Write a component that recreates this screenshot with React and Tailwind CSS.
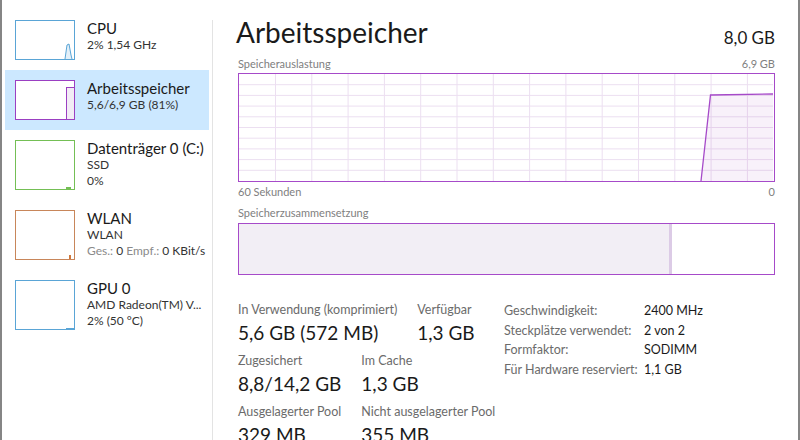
import React from "react";

const font = "font-['Segoe_UI','Lato',sans-serif]";

function Thumb({ color, h, children }) {
  return (
    <div
      className={`relative w-[60px] shrink-0 border bg-white ${h}`}
      style={{ borderColor: color }}
    >
      {children}
    </div>
  );
}

function SideItem({ thumb, title, lines, active }) {
  return (
    <div className={`flex gap-3 py-[10px] pl-[10px] ${active ? "bg-[#cce8ff]" : ""}`}>
      {thumb}
      <div className="-mt-[1px] min-w-0">
        <div className="text-[15px] leading-[18px] text-[#1a1a1a]">{title}</div>
        {lines.map((l, i) => (
          <div key={i} className="text-[12px] leading-[16px] text-[#333] whitespace-nowrap">
            {l}
          </div>
        ))}
      </div>
    </div>
  );
}

function Sidebar() {
  return (
    <div className="w-[210px] shrink-0 px-[3px] pt-[10px]">
      <SideItem
        title="CPU"
        lines={["2%  1,54 GHz"]}
        thumb={
          <Thumb color="#5aa5d6" h="h-[40px]">
            <svg className="absolute inset-0" width="58" height="38" viewBox="0 0 58 38">
              <path d="M49 38 L51 24 L53 23 L55 34 L56 38" fill="#e3f0f9" stroke="#5aa5d6" strokeWidth="1" />
            </svg>
          </Thumb>
        }
      />
      <SideItem
        active
        title="Arbeitsspeicher"
        lines={["5,6/6,9 GB (81%)"]}
        thumb={
          <Thumb color="#9b3fc2" h="h-[40px]">
            <div className="absolute bottom-0 right-0 h-[32px] w-[8px] border-l border-t border-[#9b3fc2] bg-[#f2ecf5]" />
          </Thumb>
        }
      />
      <SideItem
        title="Datenträger 0 (C:)"
        lines={["SSD", "0%"]}
        thumb={
          <Thumb color="#74bf55" h="h-[50px]">
            <div className="absolute bottom-0 right-[3px] h-[2px] w-[5px] bg-[#74bf55]" />
          </Thumb>
        }
      />
      <SideItem
        title="WLAN"
        lines={[
          "WLAN",
          <span key="g">
            <span className="text-[#8a8a8a]">Ges.: </span>0 <span className="text-[#8a8a8a]">Empf.: </span>0 KBit/s
          </span>,
        ]}
        thumb={
          <Thumb color="#c8865a" h="h-[50px]">
            <div className="absolute bottom-0 right-[3px] h-[4px] w-[2px] bg-[#d0783c]" />
          </Thumb>
        }
      />
      <SideItem
        title="GPU 0"
        lines={["AMD Radeon(TM) V...", "2%  (50 °C)"]}
        thumb={
          <Thumb color="#5aa5d6" h="h-[50px]">
            <div className="absolute bottom-0 right-0 h-[1px] w-[8px] bg-[#5aa5d6]" />
          </Thumb>
        }
      />
    </div>
  );
}

function UsageChart() {
  const W = 534;
  const H = 107;
  const vx = Array.from({ length: 14 }, (_, i) => 36.5 + 36.3 * i);
  const hy = Array.from({ length: 9 }, (_, j) => (H / 10) * (j + 1));
  return (
    <div className="h-[109px] w-full border border-[#a64ac9]">
      <svg width={W} height={H} viewBox={`0 0 ${W} ${H}`} className="block">
        {vx.map((x) => (
          <line key={x} x1={x} y1="0" x2={x} y2={H} stroke="#ecdff1" strokeWidth="1" />
        ))}
        {hy.map((y) => (
          <line key={y} x1="0" y1={y} x2={W} y2={y} stroke="#ecdff1" strokeWidth="1" />
        ))}
        <polygon points={`462,${H} 471.5,21 ${W},20 ${W},${H}`} fill="rgba(139,18,174,0.06)" />
        <polyline points={`462,${H} 471.5,21 ${W},20`} fill="none" stroke="#a64ac9" strokeWidth="1.3" />
      </svg>
    </div>
  );
}

function Stat({ label, value }) {
  return (
    <div className="flex flex-col">
      <div className="text-[12.5px] leading-[16px] text-[#6b6b6b] whitespace-nowrap">{label}</div>
      <div className="mt-[2px] text-[19px] leading-[26px] text-[#1a1a1a] whitespace-nowrap">{value}</div>
    </div>
  );
}

const props = [
  ["Geschwindigkeit:", "2400 MHz"],
  ["Steckplätze verwendet:", "2 von 2"],
  ["Formfaktor:", "SODIMM"],
  ["Für Hardware reserviert:", "1,1 GB"],
];

export default function App() {
  return (
    <div className={`flex h-[440px] w-[800px] overflow-hidden border-x-2 border-[#858585] bg-white ${font}`}>
      <Sidebar />
      <div className="mt-5 w-px shrink-0 bg-[#e3e3e3]" />
      <div className="flex min-w-0 flex-1 flex-col pl-[25px] pr-[23px] [&>*]:shrink-0">
        <div className="mt-[14px] flex items-end justify-between">
          <div className="text-[28px] leading-[36px] text-[#1a1a1a] -ml-[2px]">Arbeitsspeicher</div>
          <div className="mb-[1px] text-[17px] leading-[22px] text-[#1a1a1a]">8,0 GB</div>
        </div>
        <div className="mt-[7px] flex justify-between text-[11px] leading-[14px] text-[#808080]">
          <span>Speicherauslastung</span>
          <span>6,9 GB</span>
        </div>
        <div className="mt-[2px]">
          <UsageChart />
        </div>
        <div className="mt-[3px] flex justify-between text-[11px] leading-[14px] text-[#808080]">
          <span>60 Sekunden</span>
          <span>0</span>
        </div>
        <div className="mt-[7px] text-[11px] leading-[14px] text-[#808080]">Speicherzusammensetzung</div>
        <div className="mt-[3px] flex h-[52px] w-full border border-[#a64ac9]">
          <div className="h-full w-[433px] border-r-[3px] border-[#dccbe6] bg-[#f2eef5]" />
          <div className="flex-1 bg-white" />
        </div>
        <div className="mt-[27px] flex">
          <div className="flex w-[266px] shrink-0 flex-col gap-[7px]">
            <div className="flex gap-5">
              <Stat label="In Verwendung (komprimiert)" value="5,6 GB (572 MB)" />
              <Stat label="Verfügbar" value="1,3 GB" />
            </div>
            <div className="flex gap-5">
              <Stat label="Zugesichert" value="8,8/14,2 GB" />
              <Stat label="Im Cache" value="1,3 GB" />
            </div>
            <div className="flex gap-5">
              <Stat label="Ausgelagerter Pool" value="329 MB" />
              <Stat label="Nicht ausgelagerter Pool" value="355 MB" />
            </div>
          </div>
          <div className="-mt-[1px] flex flex-col">
            {props.map(([k, v]) => (
              <div key={k} className="flex text-[12.5px] leading-[19.6px]">
                <span className="w-[140px] shrink-0 text-[#6b6b6b]">{k}</span>
                <span className="text-[#1a1a1a]">{v}</span>
              </div>
            ))}
          </div>
        </div>
      </div>
    </div>
  );
}
